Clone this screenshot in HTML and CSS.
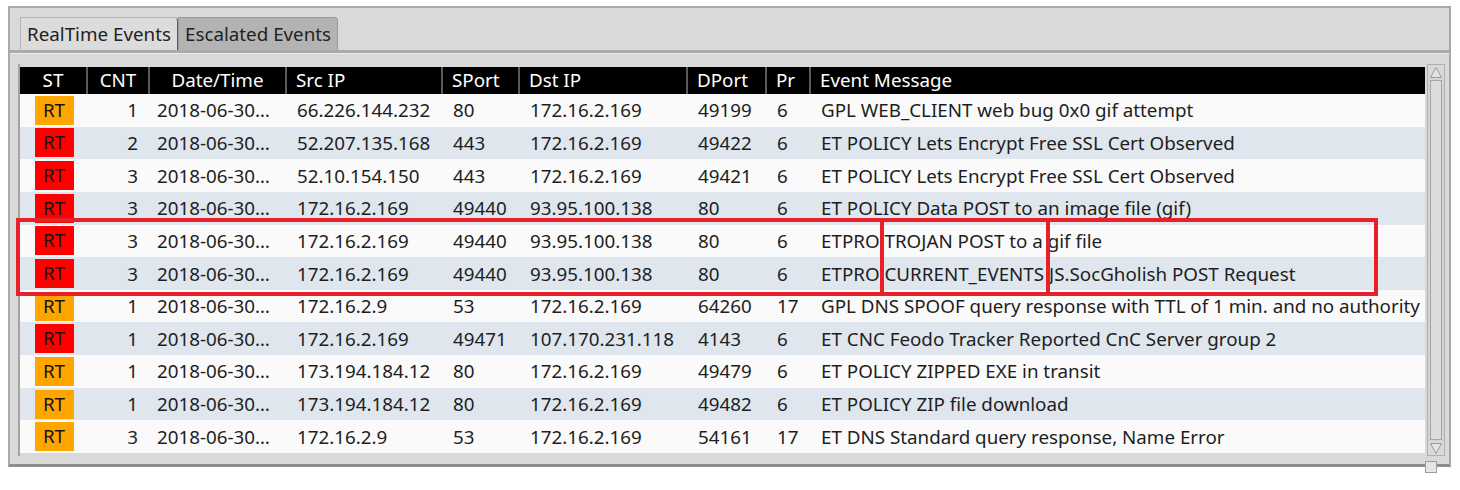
FILE: index.html
```html
<!DOCTYPE html>
<html>
<head>
<meta charset="utf-8">
<link rel="stylesheet" href="styles.css">
</head>
<body>
<div class="window">
  <div class="tabbar">
    <div class="tab active">RealTime Events</div>
    <div class="tab">Escalated Events</div>
  </div>
  <div class="panel">
    <div class="view">
      <div class="table">
        <div class="row head">
          <div class="c center">ST</div>
          <div class="c center">CNT</div>
          <div class="c center">Date/Time</div>
          <div class="c">Src IP</div>
          <div class="c">SPort</div>
          <div class="c">Dst IP</div>
          <div class="c">DPort</div>
          <div class="c">Pr</div>
          <div class="c">Event Message</div>
        </div>
        <div class="row"><div class="c st"><span class="badge orange">RT</span></div><div class="c cnt">1</div><div class="c date">2018-06-30…</div><div class="c">66.226.144.232</div><div class="c">80</div><div class="c">172.16.2.169</div><div class="c">49199</div><div class="c">6</div><div class="c">GPL WEB_CLIENT web bug 0x0 gif attempt</div></div>
        <div class="row alt"><div class="c st"><span class="badge red">RT</span></div><div class="c cnt">2</div><div class="c date">2018-06-30…</div><div class="c">52.207.135.168</div><div class="c">443</div><div class="c">172.16.2.169</div><div class="c">49422</div><div class="c">6</div><div class="c">ET POLICY Lets Encrypt Free SSL Cert Observed</div></div>
        <div class="row"><div class="c st"><span class="badge red">RT</span></div><div class="c cnt">3</div><div class="c date">2018-06-30…</div><div class="c">52.10.154.150</div><div class="c">443</div><div class="c">172.16.2.169</div><div class="c">49421</div><div class="c">6</div><div class="c">ET POLICY Lets Encrypt Free SSL Cert Observed</div></div>
        <div class="row alt"><div class="c st"><span class="badge red">RT</span></div><div class="c cnt">3</div><div class="c date">2018-06-30…</div><div class="c">172.16.2.169</div><div class="c">49440</div><div class="c">93.95.100.138</div><div class="c">80</div><div class="c">6</div><div class="c">ET POLICY Data POST to an image file (gif)</div></div>
        <div class="row"><div class="c st"><span class="badge red">RT</span></div><div class="c cnt">3</div><div class="c date">2018-06-30…</div><div class="c">172.16.2.169</div><div class="c">49440</div><div class="c">93.95.100.138</div><div class="c">80</div><div class="c">6</div><div class="c">ETPRO TROJAN POST to a gif file</div></div>
        <div class="row alt"><div class="c st"><span class="badge red">RT</span></div><div class="c cnt">3</div><div class="c date">2018-06-30…</div><div class="c">172.16.2.169</div><div class="c">49440</div><div class="c">93.95.100.138</div><div class="c">80</div><div class="c">6</div><div class="c">ETPRO CURRENT_EVENTS JS.SocGholish POST Request</div></div>
        <div class="row"><div class="c st"><span class="badge orange">RT</span></div><div class="c cnt">1</div><div class="c date">2018-06-30…</div><div class="c">172.16.2.9</div><div class="c">53</div><div class="c">172.16.2.169</div><div class="c">64260</div><div class="c">17</div><div class="c">GPL DNS SPOOF query response with TTL of 1 min. and no authority</div></div>
        <div class="row alt"><div class="c st"><span class="badge red">RT</span></div><div class="c cnt">1</div><div class="c date">2018-06-30…</div><div class="c">172.16.2.169</div><div class="c">49471</div><div class="c">107.170.231.118</div><div class="c">4143</div><div class="c">6</div><div class="c">ET CNC Feodo Tracker Reported CnC Server group 2</div></div>
        <div class="row"><div class="c st"><span class="badge orange">RT</span></div><div class="c cnt">1</div><div class="c date">2018-06-30…</div><div class="c">173.194.184.12</div><div class="c">80</div><div class="c">172.16.2.169</div><div class="c">49479</div><div class="c">6</div><div class="c">ET POLICY ZIPPED EXE in transit</div></div>
        <div class="row alt"><div class="c st"><span class="badge orange">RT</span></div><div class="c cnt">1</div><div class="c date">2018-06-30…</div><div class="c">173.194.184.12</div><div class="c">80</div><div class="c">172.16.2.169</div><div class="c">49482</div><div class="c">6</div><div class="c">ET POLICY ZIP file download</div></div>
        <div class="row"><div class="c st"><span class="badge orange">RT</span></div><div class="c cnt">3</div><div class="c date">2018-06-30…</div><div class="c">172.16.2.9</div><div class="c">53</div><div class="c">172.16.2.169</div><div class="c">54161</div><div class="c">17</div><div class="c">ET DNS Standard query response, Name Error</div></div>
      </div>
      <div class="scrollbar">
        <div class="arrow up"><svg width="14" height="13" viewBox="0 0 14 13"><path d="M1.5 11.5 L7 1.5 L12.5 11.5 Z" fill="#e4e4e4" stroke="#9a9a9a" stroke-width="1"/></svg></div>
        <div class="thumb"></div>
        <div class="arrow down"><svg width="14" height="13" viewBox="0 0 14 13"><path d="M1.5 1.5 L7 11.5 L12.5 1.5 Z" fill="#e4e4e4" stroke="#9a9a9a" stroke-width="1"/></svg></div>
      </div>
    </div>
  </div>
  <div class="grip"></div>
</div>
<div class="annot outer"></div>
<div class="annot inner"></div>
</body>
</html>
```

FILE: styles.css
```css
html, body {
  margin: 0;
  padding: 0;
  background: #ffffff;
  font-family: "Noto Sans", "Open Sans", sans-serif;
  color: #1e1e1e;
}
body {
  width: 1460px;
  height: 490px;
  position: relative;
  overflow: hidden;
}
.window {
  margin: 6px 0 0 8px;
  width: 1439px;
  height: 456px;
  border: 2px solid #a9a9a9;
  border-bottom: 3px solid #8e8e8e;
  background: #d9d9d9;
  position: relative;
}
.tabbar {
  height: 42px;
  display: flex;
  align-items: flex-end;
  padding-left: 10px;
  border-bottom: 3px solid #ababab;
  box-shadow: 0 1px 0 #ececec;
}
.tab {
  height: 33px;
  box-sizing: border-box;
  padding: 0 6px;
  font-size: 18.8px;
  line-height: 32px;
  color: #222;
  border: 1px solid #9a9a9a;
  border-bottom: none;
  border-top-right-radius: 4px;
  background: #b3b3b3;
}
.tab.active {
  background: #dcdcdc;
  border-color: #b5b5b5;
  border-right-color: #5c5c5c;
}
.panel {
  padding: 11px 4px 0 8px;
}
.view {
  display: flex;
  height: 392px;
}
.table {
  width: 1407px;
  border-left: 2px solid #a4a4a4;
  padding-top: 3px;
  background: #d9d9d9;
}
.row {
  display: grid;
  grid-template-columns: 68px 62px 137px 156px 77px 168px 79px 44px 1fr;
  height: 32.65px;
  align-items: center;
  background: #fafafa;
  font-size: 18.8px;
  white-space: nowrap;
}
.row.alt {
  background: #dfe6ee;
}
.row.head {
  height: 27px;
  background: #000;
  color: #fff;
}
.row.head .c {
  height: 27px;
  line-height: 27px;
  border-right: 2px solid #5a5a5a;
  box-sizing: border-box;
  padding-left: 9px;
}
.row.head .c:last-child {
  border-right: none;
}
.row.head .c.center {
  text-align: center;
  padding-left: 0;
}
.c {
  padding-left: 10px;
  overflow: hidden;
}
.c.st {
  padding-left: 0;
  display: flex;
  justify-content: center;
}
.c.cnt {
  text-align: right;
  padding: 0 12px 0 0;
}
.c.date {
  padding-left: 7px;
}
.badge {
  display: block;
  width: 39px;
  height: 29px;
  line-height: 29px;
  text-align: center;
  color: #151515;
}
.badge.orange { background: #ffa500; }
.badge.red { background: #ff0000; }
.scrollbar {
  margin-left: 2px;
  width: 16px;
  border: 1px solid #b0b0b0;
  background: #d4d4d4;
  display: flex;
  flex-direction: column;
  height: 390px;
}
.arrow {
  height: 14px;
  display: flex;
  align-items: center;
  justify-content: center;
  background: #d9d9d9;
}
.thumb {
  flex: 1;
  margin: 1px 2px;
  border: 1px solid #a5a5a5;
  background: #dcdcdc;
}
.grip {
  position: absolute;
  right: 12px;
  bottom: -9px;
  width: 10px;
  height: 10px;
  background: #e6e6e6;
  border: 1px solid #9c9c9c;
}
.annot {
  position: absolute;
  border: 4px solid #e8202a;
  box-sizing: border-box;
  top: 218px;
  height: 78px;
}
.annot.outer {
  left: 16px;
  width: 1362px;
}
.annot.inner {
  left: 880px;
  width: 170px;
}
```
